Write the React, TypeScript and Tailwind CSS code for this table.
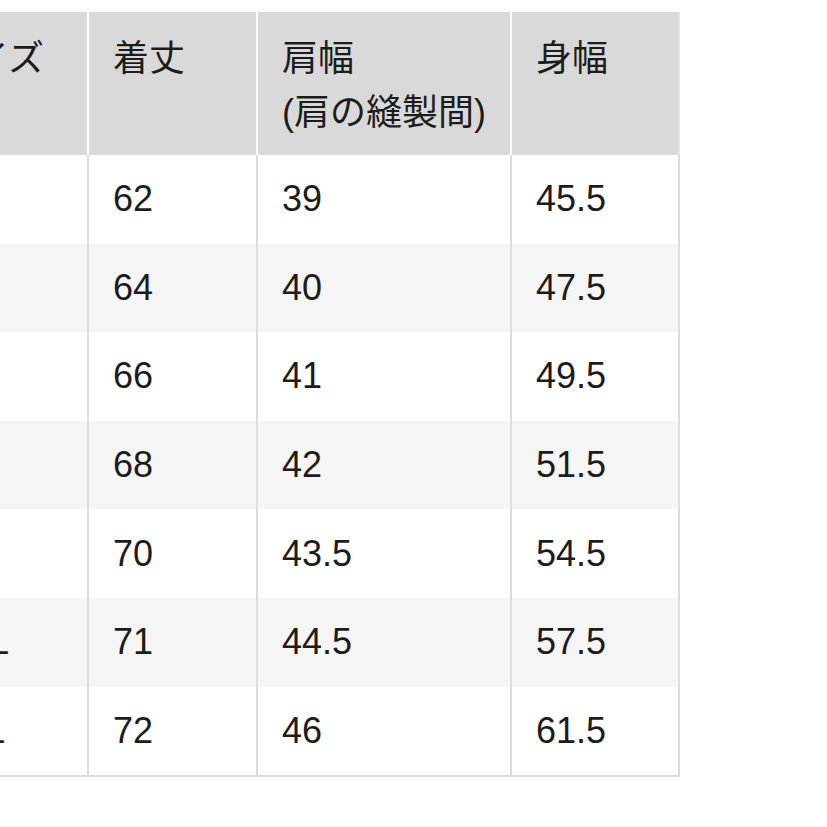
import React from "react";

const rows = [
  ["XS", "62", "39", "45.5"],
  ["S", "64", "40", "47.5"],
  ["M", "66", "41", "49.5"],
  ["L", "68", "42", "51.5"],
  ["XL", "70", "43.5", "54.5"],
  ["XXL", "71", "44.5", "57.5"],
  ["3XL", "72", "46", "61.5"],
];

export default function App() {
  return (
    <div className="min-h-[827px] w-[827px] overflow-hidden bg-white pt-3 [font-family:'Liberation_Sans','Noto_Sans_CJK_JP',sans-serif] text-[36px] text-[#1c1c1c]">
      <div className="-ml-[87px] w-[767px]">
        <div className="flex h-[143px] bg-[#d9d9d9] leading-[54px]">
          <div className="w-[174px] pl-6 pt-5">サイズ</div>
          <div className="w-[169px] border-l-2 border-white pl-6 pt-5">着丈</div>
          <div className="w-[254px] border-l-2 border-white pl-6 pt-5">
            <div>肩幅</div>
            <div>(肩の縫製間)</div>
          </div>
          <div className="w-[170px] border-l-2 border-r-2 border-l-white border-r-[#e4e4e4] pl-6 pt-5">身幅</div>
        </div>
        <div className="border-b-2 border-[#dcdcdc]">
          {rows.map((r, i) => (
            <div
              key={r[0]}
              className={`flex h-[88.6px] leading-[54px] ${i % 2 === 1 ? "bg-[#f5f5f5]" : "bg-white"}`}
            >
              <div className="flex w-[174px] items-center pl-[28px]">{r[0]}</div>
              <div className="flex w-[169px] items-center border-l-2 border-[#dcdcdc] pl-6">{r[1]}</div>
              <div className="flex w-[254px] items-center border-l-2 border-[#dcdcdc] pl-6">{r[2]}</div>
              <div className="flex w-[170px] items-center border-x-2 border-[#dcdcdc] pl-6">{r[3]}</div>
            </div>
          ))}
        </div>
      </div>
    </div>
  );
}
